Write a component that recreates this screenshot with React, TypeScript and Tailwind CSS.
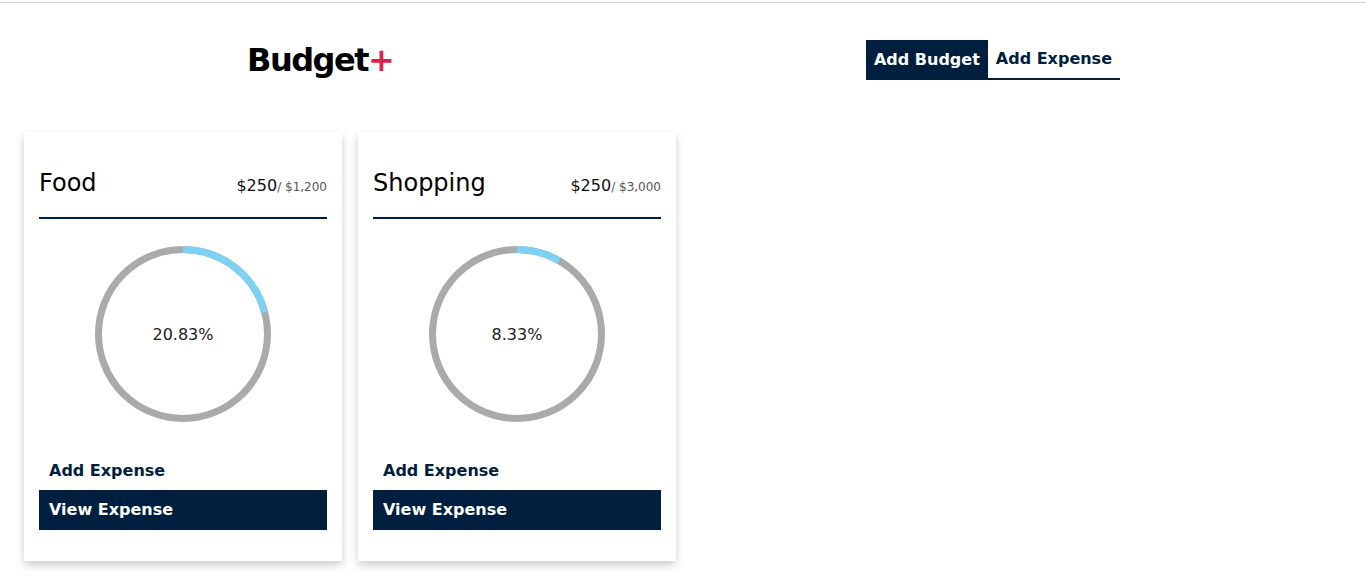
const budgets = [
  { name: 'Food', spent: '$250', total: '$1,200', pct: 20.83 },
  { name: 'Shopping', spent: '$250', total: '$3,000', pct: 8.33 },
]

function Ring({ pct }: { pct: number }) {
  const r = 84.5
  const c = 2 * Math.PI * r
  return (
    <div className="relative mx-auto mt-[27px] h-[176px] w-[176px]">
      <svg width="176" height="176" viewBox="0 0 176 176" className="-rotate-90">
        <circle cx="88" cy="88" r={r} fill="none" stroke="#aaaaaa" strokeWidth="7" />
        <circle
          cx="88"
          cy="88"
          r={r}
          fill="none"
          stroke="#7dd1f2"
          strokeWidth="7"
          strokeDasharray={`${(c * pct) / 100} ${c}`}
        />
      </svg>
      <div className="absolute inset-0 flex items-center justify-center pt-px text-[16px] text-[#222]">
        {pct.toFixed(2)}%
      </div>
    </div>
  )
}

function BudgetCard({ name, spent, total, pct }: { name: string; spent: string; total: string; pct: number }) {
  return (
    <div className="w-[318px] bg-white px-[15px] pt-[37px] pb-[31px] shadow-[0_4px_8px_0_rgba(0,0,0,0.2)]">
      <div className="flex items-baseline justify-between border-b-2 border-[#001f3f] pb-[19px]">
        <h2 className="text-[24px] leading-[29px] font-normal text-black">{name}</h2>
        <div className="text-[16px] text-[#111]">
          {spent}
          <span className="text-[12px] text-[#555]">/ {total}</span>
        </div>
      </div>
      <Ring pct={pct} />
      <button className="mt-[37px] block pl-[10px] text-[16px] leading-[24px] font-bold text-[#001f3f]">
        Add Expense
      </button>
      <button className="mt-[7px] flex h-[40px] w-full items-center bg-[#001f3f] pl-[10px] text-[16px] font-bold text-white">
        View Expense
      </button>
    </div>
  )
}

export default function App() {
  return (
    <div className="min-h-[579px] bg-white font-['DejaVu_Sans',sans-serif]">
      <div className="h-[2px]" />
      <div className="h-px bg-[#d0d0d0]" />
      <header className="mt-[37px] flex items-center justify-between px-[246px]">
        <h1 className="pl-px text-[32px] leading-[40px] font-bold tracking-[-1.5px] text-black">
          Budget<span className="text-[#e0224b]">+</span>
        </h1>
        <nav className="flex h-[40px]">
          <button className="bg-[#001f3f] px-[8px] text-[16px] font-bold text-white">Add Budget</button>
          <button className="border-b-2 border-[#001f3f] px-[8px] text-[16px] font-bold text-[#001f3f]">
            Add Expense
          </button>
        </nav>
      </header>
      <main className="mt-[52px] flex gap-[16px] px-[24px]">
        {budgets.map((b) => (
          <BudgetCard key={b.name} {...b} />
        ))}
      </main>
    </div>
  )
}
